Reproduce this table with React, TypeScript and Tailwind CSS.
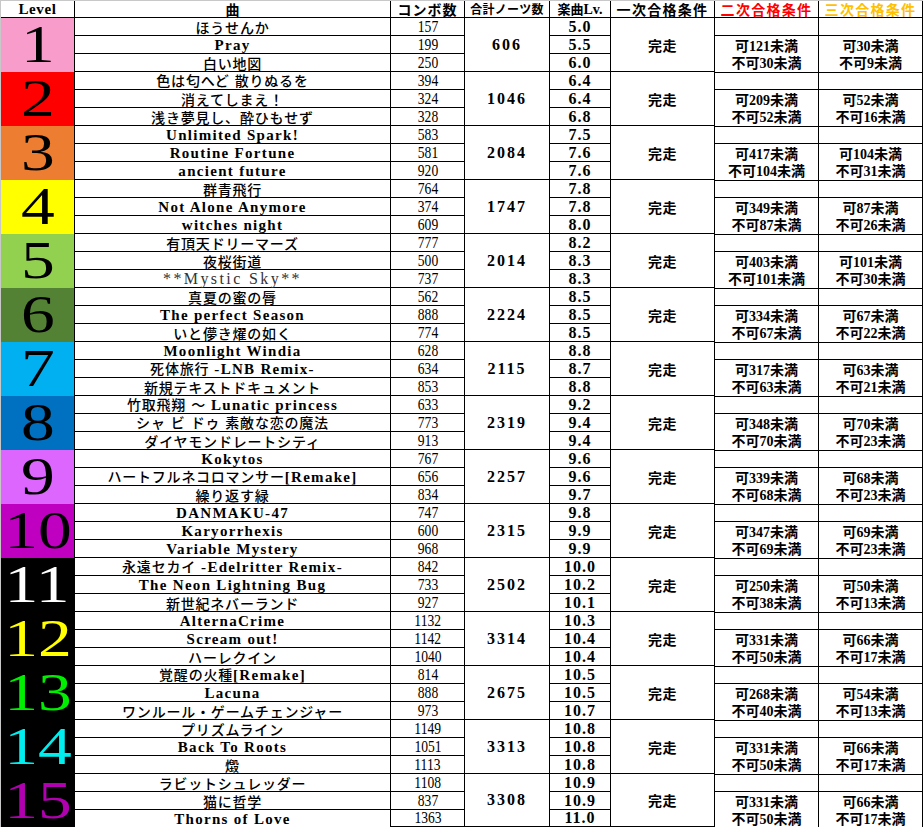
import React from "react";

type Level = {
  n: number;
  bg: string;
  fg: string;
  songs: [string, number, string][];
  total: number;
  c2: [string, string];
  c3: [string, string];
};

const LEVELS: Level[] = [
  { n: 1, bg: "bg-[#f79ccb]", fg: "text-black", songs: [["ほうせんか", 157, "5.0"], ["Pray", 199, "5.5"], ["白い地図", 250, "6.0"]], total: 606, c2: ["可121未満", "不可30未満"], c3: ["可30未満", "不可9未満"] },
  { n: 2, bg: "bg-[#ff0000]", fg: "text-black", songs: [["色は匂へど 散りぬるを", 394, "6.4"], ["消えてしまえ！", 324, "6.4"], ["浅き夢見し、酔ひもせず", 328, "6.8"]], total: 1046, c2: ["可209未満", "不可52未満"], c3: ["可52未満", "不可16未満"] },
  { n: 3, bg: "bg-[#ed7d31]", fg: "text-black", songs: [["Unlimited Spark!", 583, "7.5"], ["Routine Fortune", 581, "7.6"], ["ancient future", 920, "7.6"]], total: 2084, c2: ["可417未満", "不可104未満"], c3: ["可104未満", "不可31未満"] },
  { n: 4, bg: "bg-[#ffff00]", fg: "text-black", songs: [["群青飛行", 764, "7.8"], ["Not Alone Anymore", 374, "7.8"], ["witches night", 609, "8.0"]], total: 1747, c2: ["可349未満", "不可87未満"], c3: ["可87未満", "不可26未満"] },
  { n: 5, bg: "bg-[#92d050]", fg: "text-black", songs: [["有頂天ドリーマーズ", 777, "8.2"], ["夜桜街道", 500, "8.3"], ["**Mystic Sky**", 737, "8.3"]], total: 2014, c2: ["可403未満", "不可101未満"], c3: ["可101未満", "不可30未満"] },
  { n: 6, bg: "bg-[#548235]", fg: "text-black", songs: [["真夏の蜜の脣", 562, "8.5"], ["The perfect Season", 888, "8.5"], ["いと儚き燿の如く", 774, "8.5"]], total: 2224, c2: ["可334未満", "不可67未満"], c3: ["可67未満", "不可22未満"] },
  { n: 7, bg: "bg-[#00b0f0]", fg: "text-black", songs: [["Moonlight Windia", 628, "8.8"], ["死体旅行 -LNB Remix-", 634, "8.7"], ["新規テキストドキュメント", 853, "8.8"]], total: 2115, c2: ["可317未満", "不可63未満"], c3: ["可63未満", "不可21未満"] },
  { n: 8, bg: "bg-[#0070c0]", fg: "text-black", songs: [["竹取飛翔 ～ Lunatic princess", 633, "9.2"], ["シャ ビ ドゥ 素敵な恋の魔法", 773, "9.4"], ["ダイヤモンドレートシティ", 913, "9.4"]], total: 2319, c2: ["可348未満", "不可70未満"], c3: ["可70未満", "不可23未満"] },
  { n: 9, bg: "bg-[#dd66ff]", fg: "text-black", songs: [["Kokytos", 767, "9.6"], ["ハートフルネコロマンサー[Remake]", 656, "9.6"], ["繰り返す緑", 834, "9.7"]], total: 2257, c2: ["可339未満", "不可68未満"], c3: ["可68未満", "不可23未満"] },
  { n: 10, bg: "bg-[#c000c0]", fg: "text-black", songs: [["DANMAKU-47", 747, "9.8"], ["Karyorrhexis", 600, "9.9"], ["Variable Mystery", 968, "9.9"]], total: 2315, c2: ["可347未満", "不可69未満"], c3: ["可69未満", "不可23未満"] },
  { n: 11, bg: "bg-black", fg: "text-white", songs: [["永遠セカイ -Edelritter Remix-", 842, "10.0"], ["The Neon Lightning Bug", 733, "10.2"], ["新世紀ネバーランド", 927, "10.1"]], total: 2502, c2: ["可250未満", "不可38未満"], c3: ["可50未満", "不可13未満"] },
  { n: 12, bg: "bg-black", fg: "text-[#ffff00]", songs: [["AlternaCrime", 1132, "10.3"], ["Scream out!", 1142, "10.4"], ["ハーレクイン", 1040, "10.4"]], total: 3314, c2: ["可331未満", "不可50未満"], c3: ["可66未満", "不可17未満"] },
  { n: 13, bg: "bg-black", fg: "text-[#00ee00]", songs: [["覚醒の火種[Remake]", 814, "10.5"], ["Lacuna", 888, "10.5"], ["ワンルール・ゲームチェンジャー", 973, "10.7"]], total: 2675, c2: ["可268未満", "不可40未満"], c3: ["可54未満", "不可13未満"] },
  { n: 14, bg: "bg-black", fg: "text-[#00eeee]", songs: [["プリズムライン", 1149, "10.8"], ["Back To Roots", 1051, "10.8"], ["燬", 1113, "10.8"]], total: 3313, c2: ["可331未満", "不可50未満"], c3: ["可66未満", "不可17未満"] },
  { n: 15, bg: "bg-black", fg: "text-[#b000b0]", songs: [["ラビットシュレッダー", 1108, "10.9"], ["猫に哲学", 837, "10.9"], ["Thorns of Love", 1363, "11.0"]], total: 3308, c2: ["可331未満", "不可50未満"], c3: ["可66未満", "不可17未満"] },
];

const CJK_RE = /[\u3000-\u30ff\u3400-\u9fff\uff00-\uffef]/;
const SPLIT_RE = /[\u3000-\u30ff\u3400-\u9fff\uff00-\uffef]+|[^\u3000-\u30ff\u3400-\u9fff\uff00-\uffef]+/g;

function Mixed({ text, latin, cjk }: { text: string; latin: string; cjk: string }) {
  const parts = text.match(SPLIT_RE) ?? [];
  return (
    <span className="leading-[16px] whitespace-pre">
      {parts.map((p, i) =>
        CJK_RE.test(p[0]) ? (
          <span key={i} className={cjk}>
            {p}
          </span>
        ) : (
          <span key={i} className={latin}>
            {p}
          </span>
        )
      )}
    </span>
  );
}

const SERIF = "font-['Liberation_Serif','Noto_Sans_CJK_JP',serif]";
const CJK = "font-['Noto_Sans_CJK_JP',sans-serif]";

const titleLatin = `${SERIF} font-bold text-[15px] tracking-[1.3px]`;
const titleCjk = `${CJK} font-medium text-[14px] tracking-[0.8px]`;
const condLatin = `${SERIF} font-bold text-[14px]`;
const condCjk = `${CJK} font-bold text-[14px]`;

const cell = "flex items-center justify-center border-r border-b border-black whitespace-nowrap";

function Header() {
  return (
    <div className="flex h-[17px]">
      <div className={`${cell} w-[74px] h-full`}>
        <span className={`${SERIF} font-bold text-[15px] tracking-[0.6px] leading-[16px]`}>Level</span>
      </div>
      <div className={`${cell} w-[316px] h-full`}>
        <span className={`${CJK} font-bold text-[14px] leading-[16px]`}>曲</span>
      </div>
      <div className={`${cell} w-[74px] h-full`}>
        <span className={`${CJK} font-bold text-[14px] tracking-[1px] leading-[16px]`}>コンボ数</span>
      </div>
      <div className={`${cell} w-[85px] h-full`}>
        <span className={`${CJK} font-bold text-[12px] tracking-[0.3px] leading-[16px]`}>合計ノーツ数</span>
      </div>
      <div className={`${cell} w-[61px] h-full`}>
        <span className="leading-[16px]">
          <span className={`${CJK} font-bold text-[13px]`}>楽曲</span>
          <span className={`${SERIF} font-bold text-[14px]`}>Lv.</span>
        </span>
      </div>
      <div className={`${cell} w-[104px] h-full`}>
        <span className={`${CJK} font-bold text-[14px] tracking-[1.3px] leading-[16px]`}>一次合格条件</span>
      </div>
      <div className={`${cell} w-[104px] h-full`}>
        <span className={`${CJK} font-bold text-[14px] tracking-[1.3px] leading-[16px] text-[#ff0000]`}>二次合格条件</span>
      </div>
      <div className={`${cell} w-[104px] h-full`}>
        <span className={`${CJK} font-bold text-[14px] tracking-[1.3px] leading-[16px] text-[#ffc000]`}>三次合格条件</span>
      </div>
    </div>
  );
}

function StackedColumn({ width, items }: { width: string; items: React.ReactNode[] }) {
  return (
    <div className={`flex flex-col ${width} h-full`}>
      <div className={`${cell} h-[18px] shrink-0`}>{items[0]}</div>
      <div className={`${cell} h-[18px] shrink-0`}>{items[1]}</div>
      <div className={`${cell} flex-1`}>{items[2]}</div>
    </div>
  );
}

function CondColumn({ lines }: { lines: [string, string] }) {
  return (
    <div className="flex flex-col w-[104px] h-full">
      <div className={`${cell} h-[18px] shrink-0`} />
      <div className="flex flex-col flex-1 border-r border-b border-black">
        <div className="flex items-center justify-center h-[18px] shrink-0 whitespace-nowrap pt-[1px]">
          <Mixed text={lines[0]} latin={condLatin} cjk={condCjk} />
        </div>
        <div className="flex items-center justify-center flex-1 whitespace-nowrap">
          <Mixed text={lines[1]} latin={condLatin} cjk={condCjk} />
        </div>
      </div>
    </div>
  );
}

function LevelBlock({ lv, last }: { lv: Level; last: boolean }) {
  return (
    <div className={`flex ${last ? "h-[53px]" : "h-[54px]"}`}>
      <div className={`flex items-center justify-center w-[74px] h-full border-r border-black ${lv.bg}`}>
        <span className={`inline-block scale-x-[1.3] font-['Liberation_Serif',serif] text-[52px] leading-none ${lv.fg}`}>
          {lv.n}
        </span>
      </div>
      <StackedColumn
        width="w-[316px]"
        items={lv.songs.map(([t], i) =>
          t.startsWith("**") ? (
            <span key={i} className={`${SERIF} text-[16px] tracking-[2.4px] leading-[16px] text-[#333]`}>
              {t}
            </span>
          ) : (
            <Mixed key={i} text={t} latin={titleLatin} cjk={titleCjk} />
          )
        )}
      />
      <StackedColumn
        width="w-[74px]"
        items={lv.songs.map(([, c], i) => (
          <span key={i} className={`inline-block scale-x-[0.85] ${SERIF} text-[16px] leading-[16px]`}>
            {c}
          </span>
        ))}
      />
      <div className={`${cell} w-[85px] h-full`}>
        <span className={`${SERIF} font-bold text-[16px] tracking-[2px] leading-[16px]`}>{lv.total}</span>
      </div>
      <StackedColumn
        width="w-[61px]"
        items={lv.songs.map(([, , l], i) => (
          <span key={i} className={`${SERIF} font-bold text-[16px] tracking-[1px] leading-[16px]`}>
            {l}
          </span>
        ))}
      />
      <div className={`${cell} w-[104px] h-full`}>
        <span className={`${CJK} font-bold text-[14px] tracking-[0.5px] leading-[16px]`}>完走</span>
      </div>
      <CondColumn lines={lv.c2} />
      <CondColumn lines={lv.c3} />
    </div>
  );
}

export default function App() {
  return (
    <div className="w-[923px] h-[827px] overflow-hidden bg-white text-black">
      <div className="w-[923px] border-t border-l border-[#c8c8c8]">
        <Header />
        {LEVELS.map((lv, i) => (
          <LevelBlock key={lv.n} lv={lv} last={i === LEVELS.length - 1} />
        ))}
      </div>
    </div>
  );
}
